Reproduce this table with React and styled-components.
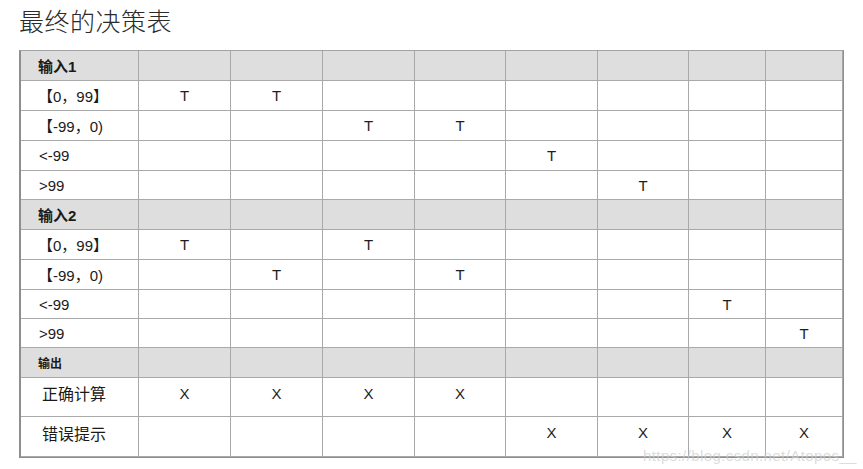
import React from 'react'
import styled, { createGlobalStyle } from 'styled-components'

const GlobalStyle = createGlobalStyle`
  body {
    margin: 0;
    background: #fff;
    font-family: "Liberation Sans", Arial, "Noto Sans CJK SC", sans-serif;
    color: #222;
  }
`

const Page = styled.div`
  position: relative;
  width: 863px;
  height: 469px;
  padding: 4px 0 0 18px;
  box-sizing: border-box;
  overflow: hidden;
`

const Title = styled.h1`
  margin: 0 0 13px 1px;
  font-family: "Noto Sans CJK SC", sans-serif;
  font-size: 25px;
  line-height: 33px;
  letter-spacing: 0.5px;
  font-weight: 300;
  color: #2a2a2a;
`

const Grid = styled.div`
  display: grid;
  grid-template-columns: 118px 92px 92px 92px 91px 92px 91px 77px 77px;
  width: 825px;
  margin-left: 1px;
  box-sizing: border-box;
  border-top: 1px solid #a3a3a3;
  border-left: 2px solid #8e8e8e;
  border-right: 1px solid #8e8e8e;
  border-bottom: 1px solid #8e8e8e;
`

const Cell = styled.div`
  box-sizing: border-box;
  height: ${p => p.$h}px;
  padding-bottom: ${p => p.$lift || 0}px;
  border-right: 1px solid #a9a9a9;
  border-bottom: 1px solid #a9a9a9;
  background: ${p => (p.$head ? '#dedede' : '#fff')};
  display: flex;
  align-items: center;
  justify-content: center;
  font-size: 15px;
  color: #1e1e1e;
`

const Label = styled(Cell)`
  justify-content: flex-start;
  padding-left: ${p => p.$pad}px;
  font-size: ${p => p.$size}px;
  font-weight: ${p => (p.$bold ? 700 : 400)};
  color: #1a1a1a;
`

const Watermark = styled.div`
  position: absolute;
  left: 643px;
  top: 447px;
  white-space: nowrap;
  font-family: "Liberation Sans", Arial, sans-serif;
  font-size: 15px;
  color: rgba(205, 205, 205, 0.7);
  letter-spacing: 0.4px;
`

const rows = [
  { label: '输入1', head: true, bold: true, size: 15, pad: 17, h: 30, marks: [] },
  { label: '【0，99】', pad: 17, h: 30, size: 15, marks: ['T', 'T'] },
  { label: '【-99，0)', pad: 17, h: 30, size: 15, marks: ['', '', 'T', 'T'] },
  { label: '<-99', pad: 18, h: 30, size: 15, marks: ['', '', '', '', 'T'] },
  { label: '>99', pad: 18, h: 29, size: 15, marks: ['', '', '', '', '', 'T'] },
  { label: '输入2', head: true, bold: true, size: 15, pad: 17, h: 30, marks: [] },
  { label: '【0，99】', pad: 17, h: 30, size: 15, marks: ['T', '', 'T'] },
  { label: '【-99，0)', pad: 17, h: 30, size: 15, marks: ['', 'T', '', 'T'] },
  { label: '<-99', pad: 18, h: 29, size: 15, marks: ['', '', '', '', '', '', 'T'] },
  { label: '>99', pad: 18, h: 29, size: 15, marks: ['', '', '', '', '', '', '', 'T'] },
  { label: '输出', head: true, bold: true, size: 12, pad: 17, h: 30, marks: [] },
  { label: '正确计算', pad: 21, h: 39, size: 16, lift: 8, marks: ['X', 'X', 'X', 'X'] },
  { label: '错误提示', pad: 21, h: 40, size: 16, lift: 8, marks: ['', '', '', '', 'X', 'X', 'X', 'X'] },
]

export default function App() {
  return (
    <Page>
      <GlobalStyle />
      <Title>最终的决策表</Title>
      <Grid>
        {rows.map((r, i) => (
          <React.Fragment key={i}>
            <Label $h={r.h} $head={r.head} $bold={r.bold} $size={r.size} $pad={r.pad} $lift={r.lift}>
              {r.label}
            </Label>
            {Array.from({ length: 8 }).map((_, j) => (
              <Cell key={j} $h={r.h} $head={r.head} $lift={r.lift}>
                {r.marks[j] || ''}
              </Cell>
            ))}
          </React.Fragment>
        ))}
      </Grid>
      <Watermark>https://blog.csdn.net/Atopos__</Watermark>
    </Page>
  )
}
